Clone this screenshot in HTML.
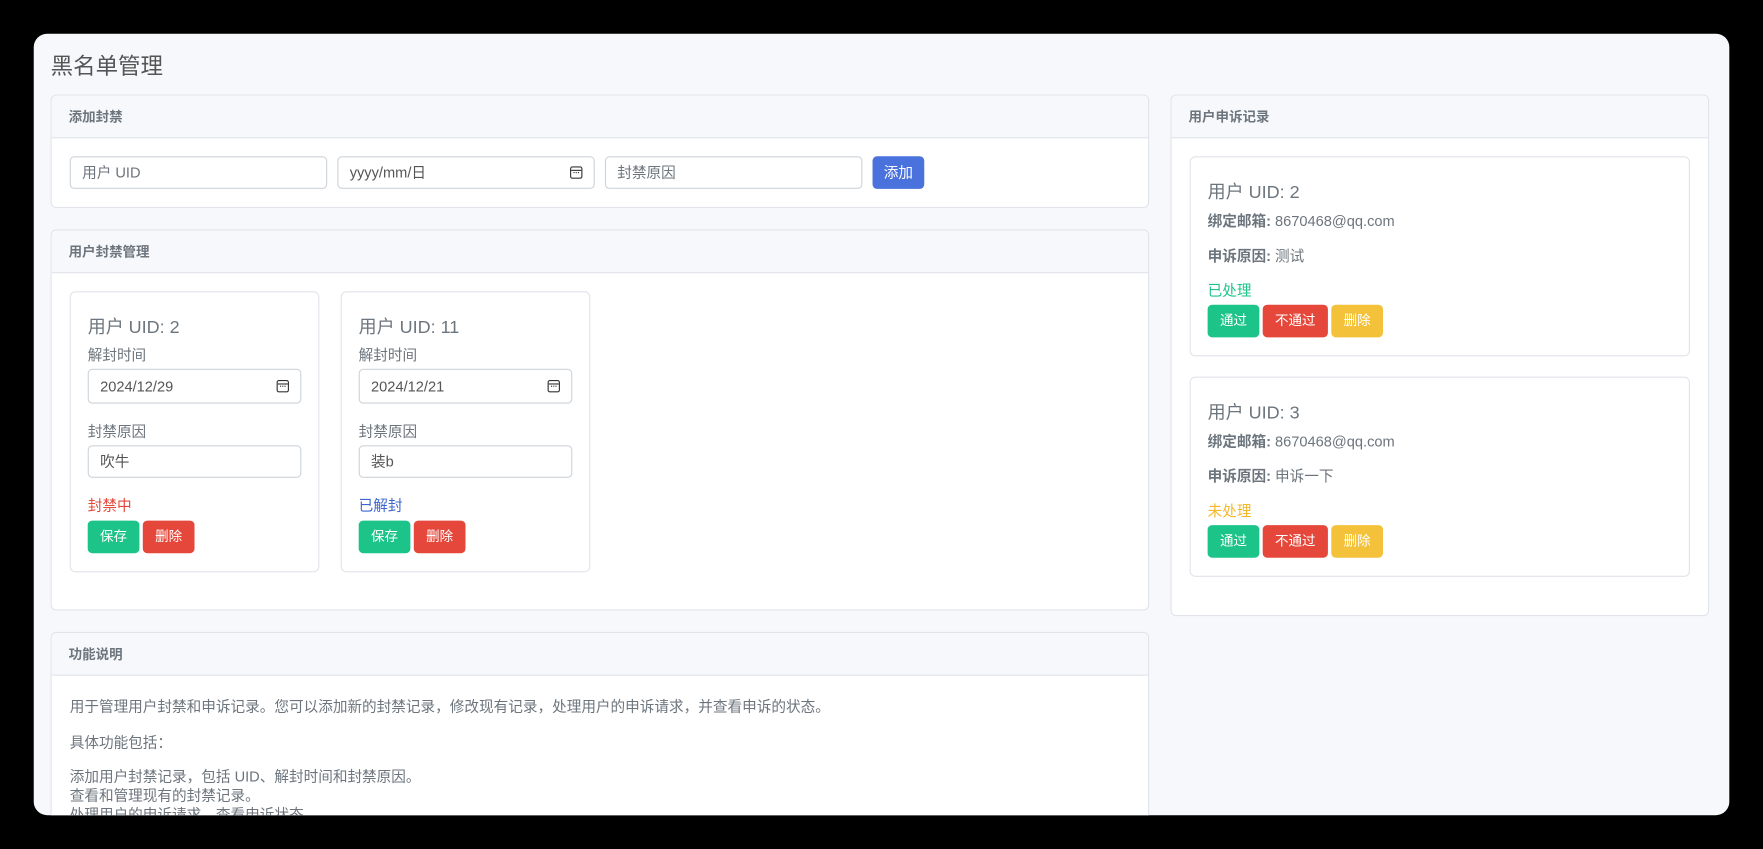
<!DOCTYPE html>
<html><head><meta charset="utf-8"><style>
*{box-sizing:border-box;margin:0;padding:0}
html,body{width:1763px;height:849px;background:#000;overflow:hidden}
body{font-family:"Liberation Sans","Noto Sans CJK SC",sans-serif;color:#6c757d;position:relative}
.stage{position:absolute;left:0;top:0;width:1568px;height:755px;transform:scale(1.1244);transform-origin:0 0}
.wrap{position:absolute;left:30px;top:30px;width:1508px;height:695px;background:#f6f8fb;border-radius:12px;overflow:hidden}
.a{position:absolute}
.card{position:absolute;background:#fff;border:1px solid #e1e4ea;border-radius:5px;overflow:hidden}
.hd{position:absolute;left:0;right:0;top:0;height:38px;background:#f7f8fb;border-bottom:1px solid #e1e4ea;font-size:12px;font-weight:bold;color:#6c757d;padding-left:15px;line-height:38px}
.in{position:absolute;height:29px;border:1px solid #ced4da;border-radius:4px;background:#fff;font-size:13px;color:#6c757d;padding-left:10px;line-height:27px}
.btn{position:absolute;height:29px;border-radius:4px;color:#fff;font-size:12px;text-align:center;line-height:29px}
.g{background:#1dc48a}.r{background:#e5483b}.y{background:#f4c23a}.b{background:#4a72dd}
.ic{position:absolute;right:10px;top:8px;width:11px;height:11px;border:1.5px solid #333;border-radius:2px}
.ic:before{content:"";position:absolute;left:0;right:0;top:2px;border-top:1px solid #333}
.ic:after{content:"";position:absolute;left:2px;top:4px;width:5px;height:1px;border-top:1px dotted #333}
.inner{position:absolute;background:#fff;border:1px solid #e1e4ea;border-radius:5px}
.t16{font-size:16px;color:#6c757d}
.s13{font-size:13px}
</style></head><body>
<div class="stage">
<div class="wrap">
<div class="a" style="left:15px;top:13px;font-size:20px;color:#555">黑名单管理</div>

<div class="card" style="left:15px;top:54px;width:977px;height:101px">
<div class="hd">添加封禁</div>
<div class="in" style="left:16px;top:54px;width:229px">用户 UID</div>
<div class="in" style="left:254px;top:54px;width:229px;color:#555">yyyy/mm/日<span class="ic"></span></div>
<div class="in" style="left:492px;top:54px;width:229px">封禁原因</div>
<div class="btn b" style="left:730px;top:54px;width:46px;font-size:13px">添加</div>
</div>

<div class="card" style="left:15px;top:174px;width:977px;height:339px">
<div class="hd">用户封禁管理</div>
<div class="inner" style="left:16px;top:54px;width:222px;height:250px">
 <div class="a t16" style="left:15px;top:17px">用户 UID: 2</div>
 <div class="a s13" style="left:15px;top:45px">解封时间</div>
 <div class="in" style="left:15px;top:68px;width:190px;height:31px;line-height:29px;color:#555">2024/12/29<span class="ic" style="top:9px"></span></div>
 <div class="a s13" style="left:15px;top:113px">封禁原因</div>
 <div class="in" style="left:15px;top:136px;width:190px;height:29px;color:#555">吹牛</div>
 <div class="a s13" style="left:15px;top:179px;color:#e5483b">封禁中</div>
 <div class="btn g" style="left:15px;top:203px;width:46px">保存</div>
 <div class="btn r" style="left:64px;top:203px;width:46px">删除</div>
</div>
<div class="inner" style="left:257px;top:54px;width:222px;height:250px">
 <div class="a t16" style="left:15px;top:17px">用户 UID: 11</div>
 <div class="a s13" style="left:15px;top:45px">解封时间</div>
 <div class="in" style="left:15px;top:68px;width:190px;height:31px;line-height:29px;color:#555">2024/12/21<span class="ic" style="top:9px"></span></div>
 <div class="a s13" style="left:15px;top:113px">封禁原因</div>
 <div class="in" style="left:15px;top:136px;width:190px;height:29px;color:#555">装b</div>
 <div class="a s13" style="left:15px;top:179px;color:#3f66cf">已解封</div>
 <div class="btn g" style="left:15px;top:203px;width:46px">保存</div>
 <div class="btn r" style="left:64px;top:203px;width:46px">删除</div>
</div>
</div>

<div class="card" style="left:15px;top:532px;width:977px;height:200px">
<div class="hd">功能说明</div>
<div class="a s13" style="left:16px;top:57px;line-height:17px">用于管理用户封禁和申诉记录。您可以添加新的封禁记录，修改现有记录，处理用户的申诉请求，并查看申诉的状态。</div>
<div class="a s13" style="left:16px;top:87px">具体功能包括：</div>
<div class="a s13" style="left:16px;top:119px;line-height:17px">添加用户封禁记录，包括 UID、解封时间和封禁原因。<br>查看和管理现有的封禁记录。<br>处理用户的申诉请求，查看申诉状态。</div>
</div>

<div class="card" style="left:1011px;top:54px;width:479px;height:464px">
<div class="hd">用户申诉记录</div>
<div class="inner" style="left:16px;top:54px;width:445px;height:178px">
 <div class="a t16" style="left:15px;top:17px">用户 UID: 2</div>
 <div class="a s13" style="left:15px;top:46px"><b>绑定邮箱:</b> 8670468@qq.com</div>
 <div class="a s13" style="left:15px;top:77px"><b>申诉原因:</b> 测试</div>
 <div class="a s13" style="left:15px;top:108px;color:#1dc48a">已处理</div>
 <div class="btn g" style="left:15px;top:131px;width:46px">通过</div>
 <div class="btn r" style="left:64px;top:131px;width:58px">不通过</div>
 <div class="btn y" style="left:125px;top:131px;width:46px">删除</div>
</div>
<div class="inner" style="left:16px;top:250px;width:445px;height:178px">
 <div class="a t16" style="left:15px;top:17px">用户 UID: 3</div>
 <div class="a s13" style="left:15px;top:46px"><b>绑定邮箱:</b> 8670468@qq.com</div>
 <div class="a s13" style="left:15px;top:77px"><b>申诉原因:</b> 申诉一下</div>
 <div class="a s13" style="left:15px;top:108px;color:#f4b82a">未处理</div>
 <div class="btn g" style="left:15px;top:131px;width:46px">通过</div>
 <div class="btn r" style="left:64px;top:131px;width:58px">不通过</div>
 <div class="btn y" style="left:125px;top:131px;width:46px">删除</div>
</div>
</div>
</div>
</div>
</body></html>
